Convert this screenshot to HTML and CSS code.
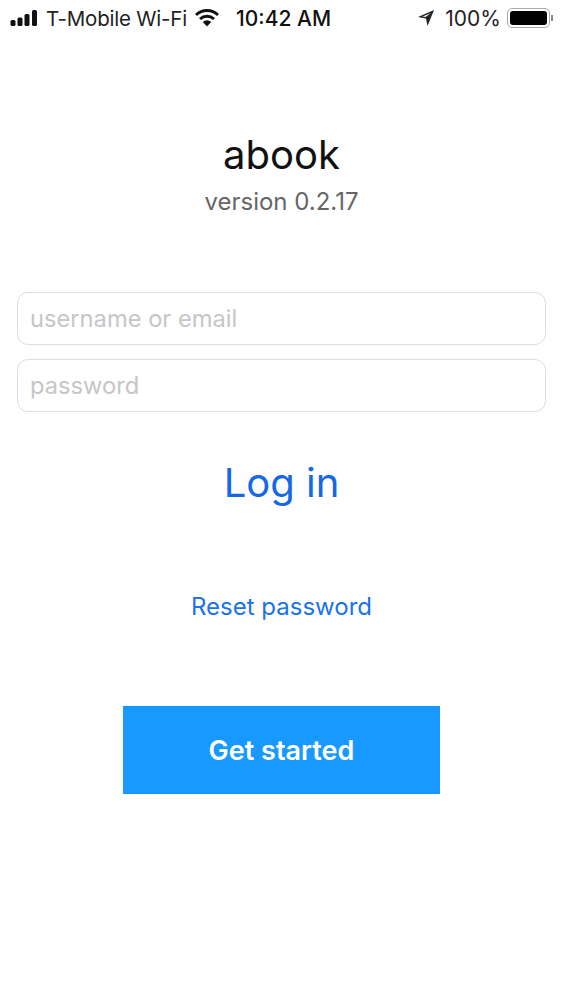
FILE: index.html
```html
<!DOCTYPE html>
<html lang="en">
<head>
  <meta charset="UTF-8">
  <title>abook</title>
  <link rel="stylesheet" href="styles.css">
</head>
<body>
  <div class="statusbar">
    <div class="status-left">
      <svg class="signal" width="29" height="16" viewBox="0 0 28 16">
        <rect x="0" y="10" width="5" height="6" rx="1.5"/>
        <rect x="7" y="7.5" width="5" height="8.5" rx="1.5"/>
        <rect x="14" y="4" width="5" height="12" rx="1.5"/>
        <rect x="21.5" y="0" width="5" height="16" rx="1.5"/>
      </svg>
      <span class="carrier">T-Mobile Wi-Fi</span>
      <svg class="wifi" width="24" height="18" viewBox="0 0 24 18">
        <path d="M1 6 A16 16 0 0 1 23 6" fill="none" stroke="#111" stroke-width="3"/>
        <path d="M5 10 A10.5 10.5 0 0 1 19 10" fill="none" stroke="#111" stroke-width="3"/>
        <path d="M12 17.5 L7.8 13 A6 6 0 0 1 16.2 13 Z" fill="#111"/>
      </svg>
    </div>
    <span class="clock">10:42 AM</span>
    <div class="status-right">
      <svg class="arrow" width="18" height="18" viewBox="0 0 18 18">
        <path d="M17 1 L1 8 L9 9.5 L10.5 17 Z M14 4 L8.5 8 L5.5 7.5 Z" fill="#222" fill-rule="evenodd"/>
      </svg>
      <span class="battery-pct">100%</span>
      <div class="battery"><div class="battery-fill"></div></div>
      <div class="battery-cap"></div>
    </div>
  </div>

  <div class="header">
    <div class="app-name">abook</div>
    <div class="version">version 0.2.17</div>
  </div>

  <form class="login-form">
    <input class="field" type="text" placeholder="username or email">
    <input class="field" type="password" placeholder="password">
  </form>

  <a class="login-link" href="#">Log in</a>
  <a class="reset-link" href="#">Reset password</a>
  <button class="start-btn" type="button">Get started</button>
</body>
</html>
```

FILE: styles.css
```css
* {
  box-sizing: border-box;
}
body {
  margin: 0;
  height: 1000px;
  background-color: #fff;
  font-family: 'Inter', 'Liberation Sans', sans-serif;
  display: flex;
  flex-direction: column;
  align-items: center;
  overflow: hidden;
}
.statusbar {
  width: 100%;
  height: 36px;
  padding: 0 10px 0 10px;
  display: flex;
  align-items: center;
  color: #222;
  font-size: 20.5px;
}
.status-left,
.status-right {
  display: flex;
  align-items: center;
}
.status-right {
  margin-left: auto;
}
.signal {
  fill: #111;
  margin-right: 7px;
}
.carrier {
  letter-spacing: -0.2px;
}
.wifi {
  margin-left: 8px;
}
.clock {
  margin-left: 17px;
  font-size: 21px;
  font-weight: 500;
  color: #111;
}
.arrow {
  margin-right: 10px;
}
.battery-pct {
  font-size: 21px;
}
.battery {
  width: 43px;
  height: 20px;
  margin-left: 6px;
  padding: 2px;
  border: 1.5px solid #aaa;
  border-radius: 5px;
}
.battery-fill {
  height: 100%;
  background-color: #000;
  border-radius: 3px;
}
.battery-cap {
  width: 2px;
  height: 6px;
  margin-left: 1px;
  background-color: #888;
}
.header {
  margin-top: 94px;
  text-align: center;
}
.app-name {
  font-size: 40px;
  line-height: 50px;
  color: #111;
}
.version {
  margin-top: 7px;
  font-size: 24px;
  line-height: 30px;
  color: #666;
}
.login-form {
  width: 100%;
  margin-top: 75px;
  padding: 0 17px;
  display: flex;
  flex-direction: column;
  gap: 14px;
}
.field {
  width: 100%;
  height: 53px;
  padding: 0 12px;
  border: 1.5px solid #ddd;
  border-radius: 11px;
  background: #fff;
  font-family: inherit;
  font-size: 23.7px;
  outline: none;
}
.field::placeholder {
  color: #c6c6c8;
  opacity: 1;
}
.login-link {
  margin-top: 44px;
  font-size: 40px;
  line-height: 54px;
  color: #1668e3;
  text-decoration: none;
}
.reset-link {
  margin-top: 82px;
  font-size: 24px;
  line-height: 30px;
  color: #1a73e8;
  text-decoration: none;
}
.start-btn {
  width: 317px;
  height: 88px;
  margin-top: 84px;
  border: none;
  background-color: #1799ff;
  color: #fff;
  font-family: inherit;
  font-size: 27px;
  font-weight: 600;
}
```
